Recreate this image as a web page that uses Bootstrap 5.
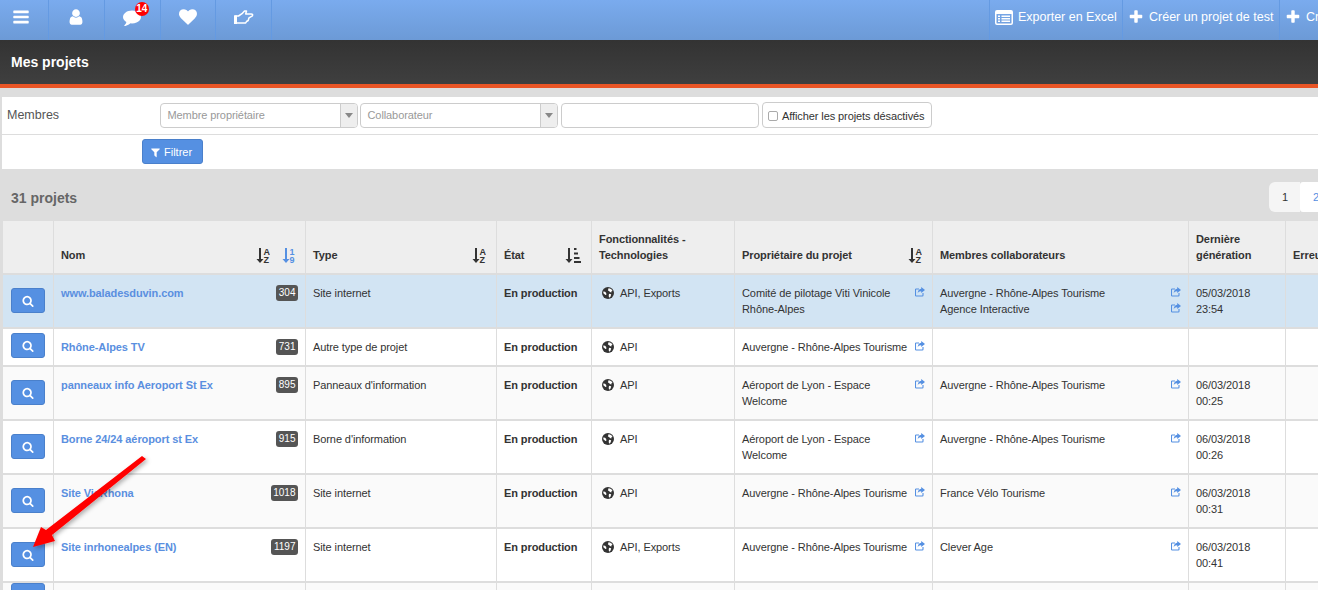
<!DOCTYPE html>
<html lang="fr">
<head>
  <meta charset="UTF-8">
  <meta name="viewport" content="width=device-width, initial-scale=1.0">
  <title>Mes projets</title>

  <link href="https://cdn.jsdelivr.net/npm/bootstrap@5.3.0/dist/css/bootstrap.min.css" rel="stylesheet">
  <script src="https://cdn.jsdelivr.net/npm/bootstrap@5.3.0/dist/js/bootstrap.bundle.min.js"></script>

  <style>
    html, body {
      height: 590px;
      overflow: hidden;
    }

    body {
      font-family: "Liberation Sans", Arial, sans-serif;
      font-size: 11px;
      line-height: 16px;
      color: #333;
      background: #ddd;
      position: relative;
    }

    /* Top bar */
    .top-bar {
      height: 40px;
      background: linear-gradient(#7aabee, #6c9ad6);
      color: #fff;
      white-space: nowrap;
      overflow: hidden;
    }

    .top-item {
      height: 40px;
      flex: none;
      border-right: 1px solid #649ae2;
      position: relative;
      padding-bottom: 6px;
    }

    .top-icon { width: 55.75px; }
    .top-icon:first-child { width: 49px; padding-right: 7px; }
    .top-icon svg { fill: #fff; }

    .top-actions { margin-left: 717px; border-left: 1px solid #649ae2; }

    .top-action {
      font-size: 12.5px;
      gap: 5px;
      padding: 0 6px 6px 5px;
    }

    .action-export { width: 133px; }
    .action-test { width: 157px; }

    .top-action svg { fill: #fff; flex: none; }

    .chat-count {
      position: absolute;
      top: 2px;
      left: 30px;
      width: 14px;
      height: 14px;
      border-radius: 50%;
      background: #f00;
      font-size: 10px;
      font-weight: bold;
      line-height: 14px;
      text-align: center;
    }

    /* Title band */
    .title-band {
      height: 48px;
      padding: 14px 11px 0;
      background: linear-gradient(#333, #3f3f3f);
      border-bottom: 4px solid #e95526;
      color: #fff;
      font-size: 14px;
      font-weight: bold;
    }

    /* Filters */
    .filter-box {
      margin: 9px 0 0 2px;
      background: #fff;
      height: 72px;
    }

    .filter-line {
      height: 38px;
      padding: 6px 0 0 5px;
      border-bottom: 1px solid #ddd;
    }

    .filter-label {
      width: 153px;
      flex: none;
      font-size: 12.5px;
      color: #555;
      padding-top: 4px;
    }

    .combo {
      width: 198px;
      height: 25px;
      margin-right: 2px;
      border: 1px solid #ccc;
      border-radius: 4px;
      color: #999;
      padding-left: 6.5px;
      letter-spacing: -.09px;
      overflow: hidden;
    }

    .combo > span:first-child { padding-bottom: 1px; }
    .combo + .combo { margin-right: 3px; }

    .combo-arrow {
      width: 17px;
      height: 100%;
      background: #eee;
      border-left: 1px solid #ccc;
    }

    .combo-arrow::after {
      content: "";
      border: 4px solid transparent;
      border-top: 5px solid #888;
      border-bottom: 0;
    }

    .search-input.form-control {
      width: 198px;
      height: 25px;
      min-height: 0;
      margin-right: 3px;
      padding: 0 6px;
      font-size: 11px;
      border-color: #ccc;
      border-radius: 4px;
    }

    .disabled-toggle {
      width: 170px;
      height: 26px;
      margin-top: -1px;
      border: 1px solid #ccc;
      border-radius: 4px;
      padding: 1px 0 0 5px;
      gap: 4px;
      color: #333;
      letter-spacing: -.09px;
      white-space: nowrap;
    }

    .disabled-toggle .form-check-input {
      width: 10px;
      height: 10px;
      margin: 0;
      border-color: #aaa;
      border-radius: 2px;
      flex: none;
    }

    .btn.btn-blue {
      --bs-btn-bg: #5590e2;
      --bs-btn-border-color: #4a80cb;
      --bs-btn-color: #fff;
      --bs-btn-padding-x: 0;
      --bs-btn-padding-y: 0;
      --bs-btn-font-size: 11px;
      --bs-btn-font-weight: 400;
      --bs-btn-border-radius: 3px;
      --bs-btn-line-height: 23px;
    }

    .btn.filter-btn {
      width: 61px;
      height: 25px;
      margin: 4px 0 0 140px;
      padding: 1px 0 0 7px;
      gap: 3px;
    }

    .filter-btn svg, .open-btn svg { fill: #fff; }

    /* Count and pagination */
    .list-head {
      height: 52px;
      padding: 13px 0 0 11px;
    }

    .list-count {
      font-size: 14px;
      font-weight: bold;
      color: #666;
      padding-top: 8px;
    }

    .pager {
      margin: 0 0 0 auto;
      gap: 1px;
      width: 49px;
      overflow: hidden;
    }

    .pager .page-link {
      width: 31px;
      height: 30px;
      padding: 7px 0 7px 13px;
      font-size: 11px;
      border: 0;
      border-radius: 3px 0 0 3px;
      color: #5590e2;
      background: #fff;
    }

    .pager .page-link.page-current { background: #f5f5f5; color: #333; }

    /* Project table */
    .table-wrap {
      margin-left: 3px;
      overflow: hidden;
    }

    .table.project-table {
      width: 1402px;
      margin: 0;
      table-layout: fixed;
      border-collapse: separate;
      border-spacing: 0;
      font-size: 11px;
      line-height: 16px;
      letter-spacing: -.09px;
    }

    .table.project-table > * > tr > * {
      padding: 10px 7px;
      border-right: 1px solid #ddd;
      border-bottom: 2px solid #ddd;
      color: #333;
      vertical-align: top;
      box-shadow: none;
      background: #fff;
    }

    .table.project-table > thead > tr > th {
      background: #eee;
      vertical-align: bottom;
      height: 54px;
      font-weight: bold;
    }

    .table.project-table > tbody > tr.row-alt > td { background: #fafafa; }
    .table.project-table > tbody > tr.row-selected > td { background: #d2e4f3; }
    .table.project-table > tbody > tr > td.open-cell { vertical-align: middle; padding: 0 8px 1px; }
    .table.project-table > tbody > tr.row-single > td.open-cell { padding-bottom: 3px; }

    .open-btn { width: 34px; height: 25px; }

    .project-link {
      color: #5a8fe0;
      font-weight: bold;
      text-decoration: none;
    }

    .badge.project-id {
      flex: none;
      height: 16px;
      padding: 0 2.5px;
      background: #555;
      font-size: 10px;
      font-weight: normal;
      line-height: 16px;
      letter-spacing: 0;
      border-radius: 3px;
    }

    .sort-icons { gap: 12px; margin-right: 3px; }
    .sort-icons.sort-pair { margin-right: 2px; }
    .sort-icon { display: block; width: 14px; height: 16px; fill: #333; }
    .sort-icon.sort-bars { width: 16px; }
    .sort-icon text { font: bold 9px "Liberation Sans", sans-serif; }
    .sort-icon.is-on { fill: #5590e2; }

    .globe { width: 12px; height: 12px; margin: 0 6px 0 3px; flex: none; }
    .share { width: 10px; height: 10px; flex: none; margin-top: 2px; fill: none; stroke: #5590e2; }
    .member-line { gap: 4px; }

    .red-arrow {
      position: absolute;
      left: 0;
      top: 0;
      pointer-events: none;
    }
  </style>
</head>
<body>
  <svg width="0" height="0" class="position-absolute">
    <symbol id="i-search" viewBox="0 0 1792 1792"><path d="M1216 832q0-185-131.500-316.500t-316.500-131.500-316.500 131.500-131.500 316.500 131.500 316.500 316.500 131.500 316.500-131.500 131.500-316.500zm512 832q0 52-38 90t-90 38q-54 0-90-38l-343-342q-179 124-399 124-143 0-273.500-55.500t-225-150-150-225-55.500-273.500 55.500-273.500 150-225 225-150 273.500-55.500 273.500 55.500 225 150 150 225 55.500 273.500q0 220-124 399l343 343q37 37 37 90z"/></symbol>
    <symbol id="i-plus" viewBox="0 0 1792 1792"><path d="M1600 736v192q0 40-28 68t-68 28h-416v416q0 40-28 68t-68 28h-192q-40 0-68-28t-28-68v-416h-416q-40 0-68-28t-28-68v-192q0-40 28-68t68-28h416v-416q0-40 28-68t68-28h192q40 0 68 28t28 68v416h416q40 0 68 28t28 68z"/></symbol>
    <symbol id="i-globe" viewBox="0 0 12 12">
      <circle cx="6" cy="6" r="6" fill="#333"/>
      <path d="M6.500 1.200c1.800.1 3.300 1 4 2.400l-1 .6-.2 1.300-1.400-.5-.8-1.100-1.200-.4zM7 6.700l2.200.6-.6 2.300-1.400 1.200-.5-1.800zM1.300 4.500l1.800.3 1.100 1.300.2 1.600-1 .3-2-1.700z" fill="#fff"/>
    </symbol>
    <symbol id="i-share" viewBox="0 0 10 10">
      <path d="M4 2H1.200a.7.700 0 0 0-.7.700v5.600c0 .4.300.7.700.7h6.100c.4 0 .7-.3.700-.7V6" fill="none" stroke-width="1.100"/>
      <path d="M6.200 0l3.800 3-3.800 3V4.300C4.500 4.200 3.200 5 2.700 6.500 2.700 4 4 2 6.200 1.800z" stroke="none" fill="#5590e2"/>
    </symbol>
  </svg>

  <div class="top-bar d-flex">
    <div class="top-item top-icon d-flex align-items-center justify-content-center">
      <svg width="18" height="18" viewBox="0 0 1792 1792"><path d="M1664 1344v128q0 26-19 45t-45 19h-1408q-26 0-45-19t-19-45v-128q0-26 19-45t45-19h1408q26 0 45 19t19 45zm0-512v128q0 26-19 45t-45 19h-1408q-26 0-45-19t-19-45v-128q0-26 19-45t45-19h1408q26 0 45 19t19 45zm0-512v128q0 26-19 45t-45 19h-1408q-26 0-45-19t-19-45v-128q0-26 19-45t45-19h1408q26 0 45 19t19 45z"/></svg>
    </div>
    <div class="top-item top-icon d-flex align-items-center justify-content-center">
      <svg width="18" height="18" viewBox="0 0 1792 1792"><path d="M1536 1399q0 109-62.500 187t-150.500 78h-854q-88 0-150.500-78t-62.500-187q0-85 8.500-160.500t31.500-152 58.500-131 94-89 134.500-34.500q131 128 313 128t313-128q76 0 134.500 34.500t94 89 58.500 131 31.500 152 8.500 160.500zm-256-887q0 159-112.500 271.500t-271.500 112.500-271.500-112.500-112.500-271.500 112.500-271.500 271.500-112.500 271.500 112.500 112.500 271.500z"/></svg>
    </div>
    <div class="top-item top-icon d-flex align-items-center justify-content-center">
      <svg width="18" height="18" viewBox="0 0 1792 1792"><path d="M1792 896q0 174-120 321.500t-326 233-450 85.500q-70 0-145-8-198 175-460 242-49 14-114 22-17 2-30.500-9t-17.500-29v-1q-3-4-.5-12t2-10 4.500-9.500l6-9 7-8.500 8-9q7-8 31-34.500t34.500-38 31-39.500 32.500-51 27-59 26-76q-157-89-247.500-220t-90.500-281q0-130 71-248.500t191-204.500 286-136.500 348-50.500q244 0 450 85.500t326 233 120 321.500z"/></svg>
      <span class="chat-count">14</span>
    </div>
    <div class="top-item top-icon d-flex align-items-center justify-content-center">
      <svg width="18" height="18" viewBox="0 0 1792 1792"><path d="M896 1664q-26 0-44-18l-624-602q-10-8-27.500-26t-55.500-65.500-68-97.500-53.500-121-23.500-138q0-220 127-344t351-124q62 0 126.500 21.500t120 58 95.500 68.500 76 68q36-36 76-68t95.500-68.500 120-58 126.500-21.500q224 0 351 124t127 344q0 221-229 450l-623 600q-18 18-44 18z"/></svg>
    </div>
    <div class="top-item top-icon d-flex align-items-center justify-content-center">
      <svg width="20" height="15" viewBox="0 0 20 15"><path d="M1 6h3.500l3.500-2.300L10.500 1h2l-.8 3h5.500c1.300 0 1.800 .8 1.200 1.800L15 7.800l-.8 2.700-1.700 1-.8 1.500H4.500L3.500 13H1z" fill="none" stroke="#fff" stroke-width="1.500" stroke-linejoin="round"/><path d="M0 5.500h3v8.500H0z"/></svg>
    </div>
    <div class="top-actions d-flex">
      <div class="top-item top-action action-export d-flex align-items-center">
        <svg width="18" height="15" viewBox="0 0 18 15"><path fill-rule="evenodd" d="M2 0h14a2 2 0 0 1 2 2v11a2 2 0 0 1-2 2H2a2 2 0 0 1-2-2V2a2 2 0 0 1 2-2zM1.500 4v9c0 .3.200.5.500.5h14c.3 0 .5-.2.500-.5V4zM3 5.500h2v1.500H3zm3.500 0H15v1.500H6.500zM3 8h2v1.500H3zm3.500 0H15v1.500H6.500zM3 10.500h2V12H3zm3.500 0H15V12H6.500z"/></svg>
        <span>Exporter en Excel</span>
      </div>
      <div class="top-item top-action action-test d-flex align-items-center">
        <svg width="16" height="16"><use href="#i-plus"/></svg>
        <span>Créer un projet de test</span>
      </div>
      <div class="top-item top-action d-flex align-items-center">
        <svg width="16" height="16"><use href="#i-plus"/></svg>
        <span>Créer un projet</span>
      </div>
    </div>
  </div>

  <div class="title-band">Mes projets</div>

  <div class="filter-box">
    <div class="filter-line d-flex">
      <div class="filter-label">Membres</div>
      <div class="combo d-flex align-items-center justify-content-between">
        <span>Membre propriétaire</span>
        <span class="combo-arrow d-flex align-items-center justify-content-center"></span>
      </div>
      <div class="combo d-flex align-items-center justify-content-between">
        <span>Collaborateur</span>
        <span class="combo-arrow d-flex align-items-center justify-content-center"></span>
      </div>
      <input class="form-control search-input" type="text">
      <label class="disabled-toggle d-flex align-items-center">
        <input class="form-check-input" type="checkbox">
        <span>Afficher les projets désactivés</span>
      </label>
    </div>
    <button class="btn btn-blue filter-btn d-flex align-items-center" type="button">
      <svg width="11" height="11" viewBox="0 0 1792 1792"><path d="M1595 295q17 41-14 70l-493 493v742q0 42-39 59-13 5-25 5-27 0-45-19l-256-256q-19-19-19-45v-486l-493-493q-31-29-14-70 17-39 59-39h1280q42 0 59 39z"/></svg>
      Filtrer
    </button>
  </div>

  <div class="list-head d-flex">
    <div class="list-count">31 projets</div>
    <ul class="pagination pager">
      <li class="page-item"><a class="page-link page-current" href="#">1</a></li>
      <li class="page-item"><a class="page-link" href="#">2</a></li>
    </ul>
  </div>

  <div class="table-wrap">
    <table class="table project-table">
      <colgroup>
        <col style="width:51px"><col style="width:252px"><col style="width:191px"><col style="width:95px">
        <col style="width:143px"><col style="width:198px"><col style="width:256px"><col style="width:97px"><col style="width:119px">
      </colgroup>
      <thead id="tableHead"></thead>
      <tbody id="tableBody"></tbody>
    </table>
  </div>

  <svg class="red-arrow" width="200" height="590" viewBox="0 0 200 590">
    <defs>
      <filter id="arrowShadow" x="-20%" y="-20%" width="140%" height="140%">
        <feDropShadow dx="2" dy="2" stdDeviation="2" flood-color="#000" flood-opacity=".3"/>
      </filter>
    </defs>
    <path d="M142 456L146 459 52 535 55 541 33 547 41 527 46 530z" fill="#f00" filter="url(#arrowShadow)"/>
  </svg>

  <script>
    const sortText = (top, bottom, on) => `<svg class="sort-icon ${on ? "is-on" : ""}" viewBox="0 0 14 16">
      <path d="M3 1h2v11h2.500L4 16 .5 12H3z"/><text x="7.500" y="7.500">${top}</text><text x="7.500" y="15.500">${bottom}</text></svg>`;
    const sortBars = `<svg class="sort-icon sort-bars" viewBox="0 0 16 16">
      <path d="M3 1h2v11h2.500L4 16 .5 12H3z"/><path d="M9 1h2.500v2H9zM9 5.500h4v2H9zM9 10h5.500v2H9zM9 14h7v2H9z"/></svg>`;

    const headers = [
      "&nbsp;",
      `<div class="d-flex justify-content-between align-items-end">Nom<span class="sort-icons sort-pair d-flex">${sortText("A", "Z")}${sortText("1", "9", true)}</span></div>`,
      `<div class="d-flex justify-content-between align-items-end">Type<span class="sort-icons d-flex">${sortText("A", "Z")}</span></div>`,
      `<div class="d-flex justify-content-between align-items-end">État<span class="sort-icons d-flex">${sortBars}</span></div>`,
      "Fonctionnalités - Technologies",
      `<div class="d-flex justify-content-between align-items-end">Propriétaire du projet<span class="sort-icons d-flex">${sortText("A", "Z")}</span></div>`,
      "Membres collaborateurs",
      "Dernière génération",
      "Erreurs"
    ];

    const projects = [
      { cls: "row-selected", name: "www.baladesduvin.com", id: 304, type: "Site internet", tech: "API, Exports",
        owner: "Comité de pilotage Viti Vinicole Rhône-Alpes", members: ["Auvergne - Rhône-Alpes Tourisme", "Agence Interactive"], date: "05/03/2018 23:54" },
      { cls: "row-single", name: "Rhône-Alpes TV", id: 731, type: "Autre type de projet", tech: "API",
        owner: "Auvergne - Rhône-Alpes Tourisme", members: [], date: "" },
      { cls: "row-alt", name: "panneaux info Aeroport St Ex", id: 895, type: "Panneaux d'information", tech: "API",
        owner: "Aéroport de Lyon - Espace Welcome", members: ["Auvergne - Rhône-Alpes Tourisme"], date: "06/03/2018 00:25" },
      { cls: "", name: "Borne 24/24 aéroport st Ex", id: 915, type: "Borne d'information", tech: "API",
        owner: "Aéroport de Lyon - Espace Welcome", members: ["Auvergne - Rhône-Alpes Tourisme"], date: "06/03/2018 00:26" },
      { cls: "row-alt", name: "Site ViaRhona", id: 1018, type: "Site internet", tech: "API",
        owner: "Auvergne - Rhône-Alpes Tourisme", members: ["France Vélo Tourisme"], date: "06/03/2018 00:31" },
      { cls: "", name: "Site inrhonealpes (EN)", id: 1197, type: "Site internet", tech: "API, Exports",
        owner: "Auvergne - Rhône-Alpes Tourisme", members: ["Clever Age"], date: "06/03/2018 00:41" },
      { cls: "row-alt", name: "", id: "", type: "", tech: "", owner: "", members: [], date: "" }
    ];

    const shareIcon = `<svg class="share"><use href="#i-share"/></svg>`;
    const searchIcon = `<svg width="12" height="12"><use href="#i-search"/></svg>`;

    document.getElementById("tableHead").innerHTML =
      `<tr>${headers.map((h) => `<th>${h}</th>`).join("")}</tr>`;

    document.getElementById("tableBody").innerHTML = projects.map((p) => `
      <tr class="${p.cls}">
        <td class="open-cell"><button class="btn btn-blue open-btn d-flex align-items-center justify-content-center" type="button">${searchIcon}</button></td>
        <td><div class="d-flex justify-content-between"><a class="project-link" href="#">${p.name}</a>${p.id ? `<span class="badge project-id">${p.id}</span>` : ""}</div></td>
        <td>${p.type}</td>
        <td><strong>${p.name ? "En production" : ""}</strong></td>
        <td>${p.tech ? `<div class="d-flex align-items-center"><svg class="globe"><use href="#i-globe"/></svg>${p.tech}</div>` : ""}</td>
        <td>${p.owner ? `<div class="d-flex justify-content-between member-line"><span>${p.owner}</span>${shareIcon}</div>` : ""}</td>
        <td>${p.members.map((m) => `<div class="d-flex justify-content-between member-line"><span>${m}</span>${shareIcon}</div>`).join("")}</td>
        <td>${p.date}</td>
        <td></td>
      </tr>`).join("");
  </script>
</body>
</html>
